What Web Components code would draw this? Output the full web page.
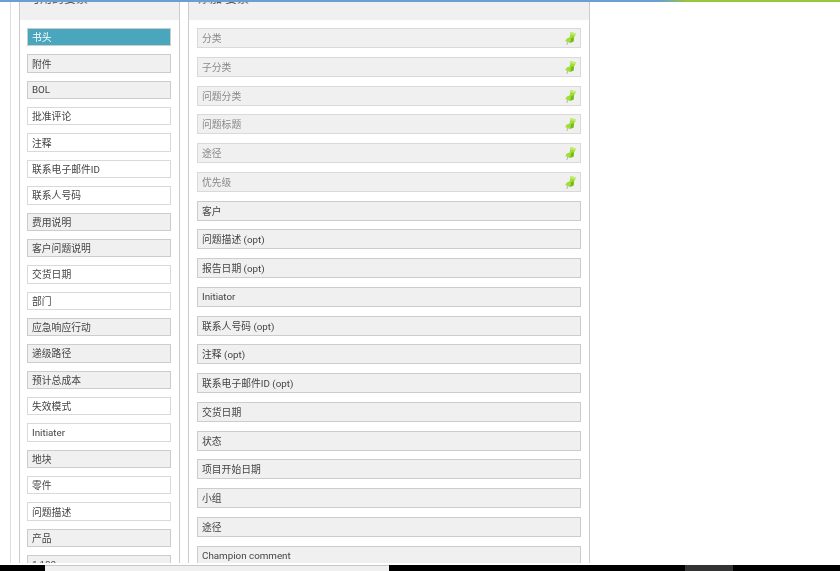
<!DOCTYPE html>
<html lang="zh">
<head>
<meta charset="utf-8">
<title>要素</title>
<style>
  html, body { margin: 0; height: 100%; background: #fff; overflow: hidden; }
  body { font-family: Roboto, "Noto Sans CJK SC", sans-serif; font-size: 9.8px; color: #333; }
</style>
</head>
<body>
<app-shell>
  <field-panel slot="left" heading="可用的要素" style="width:161px">
    <field-item state="selected">书头</field-item>
    <field-item state="grey">附件</field-item>
    <field-item state="grey">BOL</field-item>
    <field-item>批准评论</field-item>
    <field-item>注释</field-item>
    <field-item>联系电子邮件ID</field-item>
    <field-item>联系人号码</field-item>
    <field-item state="grey">费用说明</field-item>
    <field-item state="grey">客户问题说明</field-item>
    <field-item>交货日期</field-item>
    <field-item>部门</field-item>
    <field-item state="grey">应急响应行动</field-item>
    <field-item state="grey">递级路径</field-item>
    <field-item state="grey">预计总成本</field-item>
    <field-item>失效模式</field-item>
    <field-item>Initiater</field-item>
    <field-item state="grey">地块</field-item>
    <field-item>零件</field-item>
    <field-item>问题描述</field-item>
    <field-item state="grey">产品</field-item>
    <field-item state="grey">1,180</field-item>
  </field-panel>
  <field-panel slot="right" heading="添加 要素" wide style="width:402px">
    <field-item state="grey" wide pinned>分类</field-item>
    <field-item state="grey" wide pinned>子分类</field-item>
    <field-item state="grey" wide pinned>问题分类</field-item>
    <field-item state="grey" wide pinned>问题标题</field-item>
    <field-item state="grey" wide pinned>途径</field-item>
    <field-item state="grey" wide pinned>优先级</field-item>
    <field-item state="grey" wide>客户</field-item>
    <field-item state="grey" wide>问题描述 (opt)</field-item>
    <field-item state="grey" wide>报告日期 (opt)</field-item>
    <field-item state="grey" wide>Initiator</field-item>
    <field-item state="grey" wide>联系人号码 (opt)</field-item>
    <field-item state="grey" wide>注释 (opt)</field-item>
    <field-item state="grey" wide>联系电子邮件ID (opt)</field-item>
    <field-item state="grey" wide>交货日期</field-item>
    <field-item state="grey" wide>状态</field-item>
    <field-item state="grey" wide>项目开始日期</field-item>
    <field-item state="grey" wide>小组</field-item>
    <field-item state="grey" wide>途径</field-item>
    <field-item state="grey" wide>Champion comment</field-item>
  </field-panel>
</app-shell>

<script>
// Pagina inteira: barra fina em cima, paineis no meio, barra de tarefas em baixo
class AppShell extends HTMLElement {
  constructor() {
    super();
    this.attachShadow({ mode: "open" });
    this.shadowRoot.innerHTML = `
      <style>
        :host { display: flex; flex-direction: column; height: 571px; overflow: hidden; }
        .topbar { flex: none; height: 2px; background: linear-gradient(90deg, #6a9fd3 0, #6a9fd3 660px, #9ac63c 687px, #9ac63c 100%); }
        .main { flex: 1; min-height: 0; display: flex; overflow: hidden; margin-bottom: 2px; }
        .rail { flex: none; width: 8px; margin-left: 10px; border-left: 1px solid #dedede; }
        .columns { display: flex; gap: 8px; align-items: stretch; }
        .taskbar { flex: none; height: 6px; display: flex; background: #000; }
        .taskbar .off { width: 45px; }
        .taskbar .window { width: 344px; background: #f0f0f0; border-top: 1px solid #c8c8c8; box-sizing: border-box; }
        .taskbar .gap { width: 296px; }
        .taskbar .active { width: 48px; background: #333; }
      </style>
      <div class="topbar"></div>
      <div class="main">
        <div class="rail"></div>
        <div class="columns">
          <slot name="left"></slot>
          <slot name="right"></slot>
        </div>
      </div>
      <div class="taskbar">
        <div class="off"></div><div class="window"></div><div class="gap"></div><div class="active"></div>
      </div>`;
  }
}
customElements.define("app-shell", AppShell);

// Painel com cabecalho cinza; o titulo fica cortado pelo topo como na rolagem
class FieldPanel extends HTMLElement {
  constructor() {
    super();
    this.attachShadow({ mode: "open" });
    this.shadowRoot.innerHTML = `
      <style>
        :host { display: block; box-sizing: border-box; border-left: 1px solid #ccc; border-right: 1px solid #ccc; overflow: hidden; }
        .head { height: 18px; background: #f0f0f0; overflow: hidden; padding-left: 8px; }
        .title { margin-top: -11px; font-size: 12px; line-height: 16px; color: #555; }
        .list { display: flex; flex-direction: column; gap: 8px; padding: 8px 8px 0 7px; }
        :host([wide]) .head { padding-left: 9px; }
        :host([wide]) .list { padding: 8px 8px 0 8px; gap: 8.75px; }
      </style>
      <div class="head"><div class="title"></div></div>
      <div class="list"><slot></slot></div>`;
  }
  connectedCallback() {
    this.shadowRoot.querySelector(".title").textContent = this.getAttribute("heading");
  }
}
customElements.define("field-panel", FieldPanel);

// Uma linha da lista, com alfinete opcional
class FieldItem extends HTMLElement {
  constructor() {
    super();
    this.attachShadow({ mode: "open" });
    this.shadowRoot.innerHTML = `
      <style>
        :host { display: flex; align-items: center; flex: none; box-sizing: border-box; height: 18.37px; padding: 0 4px; border: 1px solid #d9d9d9; background: #fff; color: #444; white-space: nowrap; overflow: hidden; }
        :host([wide]) { height: 20px; }
        :host([state="grey"]) { background: #f0f0f0; border-color: #ccc; }
        :host([state="selected"]) { background: #4aa6bd; border-color: #ccc; color: #fff; }
        :host([pinned]) { border-color: #d9d9d9; color: #888; }
        .text { flex: 1; filter: blur(0.2px); }
        svg { flex: none; width: 12px; height: 14px; }
      </style>
      <span class="text"><slot></slot></span>`;
  }
  connectedCallback() {
    if (this.hasAttribute("pinned") && !this.shadowRoot.querySelector("svg")) {
      this.shadowRoot.innerHTML += `
        <svg viewBox="0 0 12 14" aria-hidden="true">
          <path d="M3.8 10.8 L2.8 14" stroke="#b4b4b4" stroke-width="1" fill="none"/>
          <path d="M6.5 1 L11.8 2.5 L10.8 5.5 L10 6 L9.6 10.5 L6 12 L1.2 10 L2.8 7.5 L5.5 6.5 L6.2 4 Z" fill="#a2de38"/>
          <path d="M6.6 1 L11.8 2.5 L11.2 4.2 L6.3 3 Z" fill="#c6ee70"/>
          <path d="M9.9 6 L9.6 10.5 L6.4 11.8 L7 7 Z" fill="#72bc20"/>
        </svg>`;
    }
  }
}
customElements.define("field-item", FieldItem);
</script>
</body>
</html>
